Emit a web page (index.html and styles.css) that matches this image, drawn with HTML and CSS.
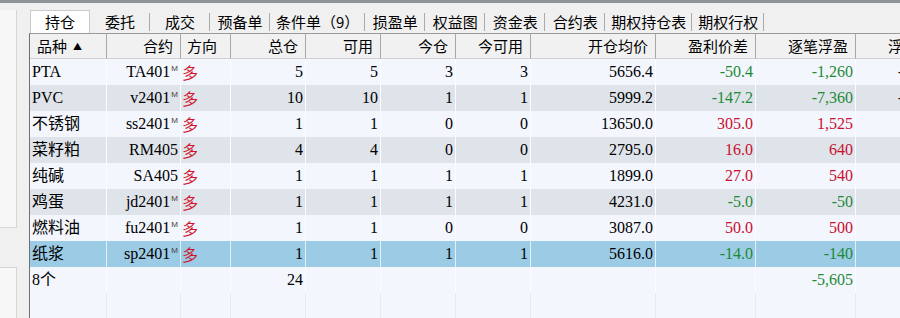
FILE: index.html
```html
<!DOCTYPE html>
<html lang="zh-CN">
<head>
    <meta charset="UTF-8">
    <title>持仓</title>
    <link rel="stylesheet" href="styles.css">
</head>
<body>
    <div class="topbar"></div>
    <div class="layout">
        <aside class="side">
            <div class="side-box side-box-top"></div>
            <div class="side-box side-box-bottom"></div>
        </aside>
        <main class="main">
            <nav class="tabs">
                <span class="tab active">持仓</span>
                <span class="tab">委托</span>
                <span class="tab">成交</span>
                <span class="tab">预备单</span>
                <span class="tab">条件单（9）</span>
                <span class="tab">损盈单</span>
                <span class="tab">权益图</span>
                <span class="tab">资金表</span>
                <span class="tab">合约表</span>
                <span class="tab">期权持仓表</span>
                <span class="tab">期权行权</span>
            </nav>
            <div class="grid">
                <table class="positions">
                    <colgroup>
                        <col class="w-name">
                        <col class="w-code">
                        <col class="w-dir">
                        <col class="w-qty">
                        <col class="w-qty">
                        <col class="w-qty">
                        <col class="w-qty">
                        <col class="w-price">
                        <col class="w-pnl">
                        <col class="w-pnl">
                        <col class="w-pnl">
                    </colgroup>
                    <thead>
                        <tr>
                            <th class="left">品种<span class="sort">▲</span></th>
                            <th>合约</th>
                            <th class="left dir-head">方向</th>
                            <th>总仓</th>
                            <th>可用</th>
                            <th>今仓</th>
                            <th>今可用</th>
                            <th>开仓均价</th>
                            <th>盈利价差</th>
                            <th>逐笔浮盈</th>
                            <th>浮动盈亏</th>
                        </tr>
                    </thead>
                    <tbody>
                        <tr class="odd">
                            <td class="left">PTA</td>
                            <td>TA401<sup class="m">M</sup></td>
                            <td class="dir">多</td>
                            <td>5</td><td>5</td><td>3</td><td>3</td>
                            <td>5656.4</td>
                            <td class="down">-50.4</td>
                            <td class="down">-1,260</td>
                            <td class="float">-1,260</td>
                        </tr>
                        <tr class="even">
                            <td class="left">PVC</td>
                            <td>v2401<sup class="m">M</sup></td>
                            <td class="dir">多</td>
                            <td>10</td><td>10</td><td>1</td><td>1</td>
                            <td>5999.2</td>
                            <td class="down">-147.2</td>
                            <td class="down">-7,360</td>
                            <td class="float">-7,360</td>
                        </tr>
                        <tr class="odd">
                            <td class="left">不锈钢</td>
                            <td>ss2401<sup class="m">M</sup></td>
                            <td class="dir">多</td>
                            <td>1</td><td>1</td><td>0</td><td>0</td>
                            <td>13650.0</td>
                            <td class="up">305.0</td>
                            <td class="up">1,525</td>
                            <td class="float">1,525</td>
                        </tr>
                        <tr class="even">
                            <td class="left">菜籽粕</td>
                            <td>RM405</td>
                            <td class="dir">多</td>
                            <td>4</td><td>4</td><td>0</td><td>0</td>
                            <td>2795.0</td>
                            <td class="up">16.0</td>
                            <td class="up">640</td>
                            <td class="float">640</td>
                        </tr>
                        <tr class="odd">
                            <td class="left">纯碱</td>
                            <td>SA405</td>
                            <td class="dir">多</td>
                            <td>1</td><td>1</td><td>1</td><td>1</td>
                            <td>1899.0</td>
                            <td class="up">27.0</td>
                            <td class="up">540</td>
                            <td class="float">540</td>
                        </tr>
                        <tr class="even">
                            <td class="left">鸡蛋</td>
                            <td>jd2401<sup class="m">M</sup></td>
                            <td class="dir">多</td>
                            <td>1</td><td>1</td><td>1</td><td>1</td>
                            <td>4231.0</td>
                            <td class="down">-5.0</td>
                            <td class="down">-50</td>
                            <td class="float">-50</td>
                        </tr>
                        <tr class="odd">
                            <td class="left">燃料油</td>
                            <td>fu2401<sup class="m">M</sup></td>
                            <td class="dir">多</td>
                            <td>1</td><td>1</td><td>0</td><td>0</td>
                            <td>3087.0</td>
                            <td class="up">50.0</td>
                            <td class="up">500</td>
                            <td class="float">500</td>
                        </tr>
                        <tr class="selected">
                            <td class="left">纸浆</td>
                            <td>sp2401<sup class="m">M</sup></td>
                            <td class="dir">多</td>
                            <td>1</td><td>1</td><td>1</td><td>1</td>
                            <td>5616.0</td>
                            <td class="down">-14.0</td>
                            <td class="down">-140</td>
                            <td class="float">-140</td>
                        </tr>
                        <tr class="odd total">
                            <td class="left">8个</td>
                            <td></td><td></td>
                            <td>24</td>
                            <td></td><td></td><td></td><td></td><td></td>
                            <td class="down">-5,605</td>
                            <td></td>
                        </tr>
                        <tr class="blank">
                            <td></td><td></td><td></td><td></td><td></td><td></td>
                            <td></td><td></td><td></td><td></td><td></td>
                        </tr>
                    </tbody>
                </table>
            </div>
        </main>
    </div>
</body>
</html>
```

FILE: styles.css
```css
/* fenêtre de base */
html, body {
    margin: 0;
    height: 100%;
    overflow: hidden;
}
body {
    background: #f0f0f0;
    color: #000;
    font-family: "Noto Sans CJK SC", sans-serif;
}
.topbar {
    height: 3px;
    background: #8e939a;
}
.layout {
    display: flex;
    height: 315px;
}

/* panneau de gauche */
.side {
    width: 29px;
    flex: none;
    display: flex;
    flex-direction: column;
}
.side-box {
    width: 17px;
    box-sizing: border-box;
    background: #f7f7f7;
    border-right: 1px solid #d6d6d6;
}
.side-box-top {
    margin-top: 7px;
    height: 218px;
    border-bottom: 1px solid #d6d6d6;
}
.side-box-bottom {
    margin-top: 39px;
    flex: 1;
    border-top: 1px solid #d6d6d6;
}

/* onglets */
.main {
    flex: 1;
    min-width: 0;
    display: flex;
    flex-direction: column;
}
.tabs {
    display: flex;
    margin-top: 7px;
    height: 23px;
    padding-left: 1px;
}
.tab {
    min-width: 60px;
    box-sizing: border-box;
    padding: 0 6px;
    text-align: center;
    font-size: 15px;
    line-height: 23px;
    white-space: nowrap;
    background: linear-gradient(#a9a9a9, #a9a9a9) right 3px / 1px 18px no-repeat;
}
.tab.active {
    background: #fff;
    border: 1px solid #cacaca;
    border-bottom: none;
    line-height: 22px;
}

/* tableau des positions */
.grid {
    flex: 1;
    border-left: 1px solid #6f6f6f;
    border-top: 1px solid #9a9a9a;
    background: #f3f6fd;
    overflow: hidden;
}
.positions {
    table-layout: fixed;
    width: 926px;
    border-collapse: separate;
    border-spacing: 0;
    font-family: "Liberation Serif", "Noto Sans CJK SC", serif;
    font-size: 16px;
}
.w-name { width: 77px; }
.w-code { width: 74px; }
.w-dir { width: 50px; }
.w-qty { width: 75px; }
.w-price { width: 125px; }
.w-pnl { width: 100px; }

.positions th {
    height: 24px;
    padding: 0 7px;
    font-family: "Noto Sans CJK SC", sans-serif;
    font-size: 15px;
    font-weight: normal;
    line-height: 20px;
    text-align: right;
    white-space: nowrap;
    overflow: hidden;
    background: #f1f1f1;
    border-right: 1px solid #a8a8a8;
    border-bottom: 1px solid #cfcfcf;
}
.positions th.left {
    text-align: left;
}
.positions th.dir-head {
    padding-left: 6px;
}
.sort {
    font-size: 9px;
    margin-left: 6px;
    vertical-align: 2px;
}

.positions tbody tr {
    height: 26px;
}
.positions td {
    padding: 0 2px;
    line-height: 20px;
    text-align: right;
    white-space: nowrap;
    overflow: hidden;
    border-right: 1px solid #fbfcff;
}
.positions td.left {
    text-align: left;
}
.positions td.dir {
    text-align: left;
    padding-left: 1px;
    color: #d0142c;
    font-family: "Noto Sans CJK SC", sans-serif;
}
.positions td.float {
    padding-right: 16px;
    color: #222;
}
.m {
    font-family: "Liberation Sans", sans-serif;
    font-size: 8px;
    line-height: 0;
    vertical-align: 6px;
    margin-left: 1px;
    color: #444;
}

.odd td { background: #f3f6fd; }
.even td { background: #dfe3ea; }
.selected td {
    background: #9ccbe5;
    border-right-color: #e4f0f8;
}
.blank td {
    border-right-color: #e6eaf2;
}
.up { color: #c8102e; }
.down { color: #1d8a36; }
```
